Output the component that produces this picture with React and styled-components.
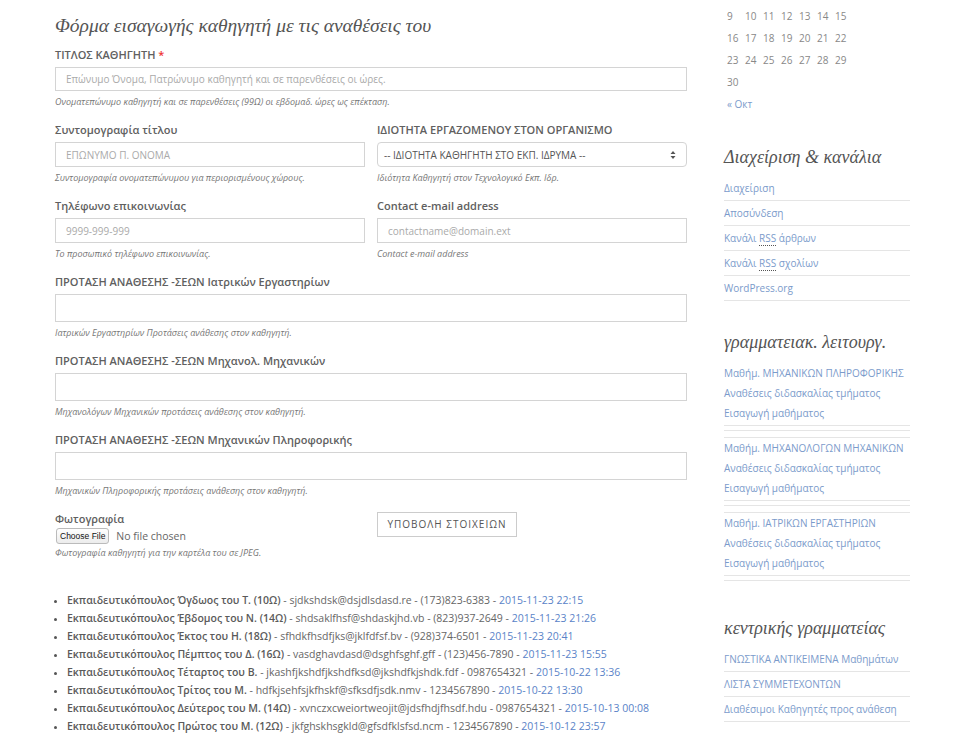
import styled, {createGlobalStyle} from 'styled-components';

const Global = createGlobalStyle`
	body {
		margin:0;
		background:#fff;
		font-family:"Open Sans", "Noto Sans", sans-serif;
		color:#555;
	}
`

const Page = styled.div`
	display:flex;
	align-items:flex-start;
	padding:0 52px 0 55px;
	gap:37px;
`

const Main = styled.main`
	width:632px;
	flex:none;
	padding-top:14px;
`

const Title = styled.h1`
	font-family:"Liberation Serif", "DejaVu Serif", serif;
	font-style:italic;
	font-weight:normal;
	font-size:19.5px;
	line-height:24px;
	color:#555;
	margin:0 0 9px;
`

const Row = styled.div`
	display:grid;
	grid-template-columns:1fr 1fr;
	column-gap:12px;
`

const Field = styled.div`
	margin-bottom:14px;
`

const Label = styled.div`
	font-size:11px;
	font-weight:600;
	line-height:16px;
	color:#606060;
	margin-bottom:4px;
	span { color:#e33; }
`

const Input = styled.div`
	box-sizing:border-box;
	height:${p=>p.h||25}px;
	border:1px solid #d4d4d4;
	border-radius:${p=>p.round?'4px':'0'};
	padding:0 10px 0 ${p=>p.pad||10}px;
	display:flex;
	align-items:center;
	justify-content:space-between;
	font-size:10px;
	color:${p=>p.dark?'#555':'#aaa'};
	background:#fff;
`

const Help = styled.div`
	font-size:9px;
	font-style:italic;
	line-height:12px;
	margin-top:${p=>p.tight?2:5}px;
	color:#777;
`

const Bottom = styled.div`
	display:grid;
	grid-template-columns:1fr 1fr;
	column-gap:12px;
	align-items:start;
`

const FileRow = styled.div`
	display:flex;
	align-items:center;
	gap:7px;
	height:18px;
	font-size:10.5px;
	color:#666;
	margin-top:-4px;
`

const FileButton = styled.span`
	font-family:"Liberation Sans", Arial, sans-serif;
	font-size:8.5px;
	color:#111;
	border:1px solid #bbb;
	border-radius:3px;
	background:linear-gradient(#fff,#ececec);
	padding:2px 3px;
	line-height:10px;
	margin-left:1px;
`

const Submit = styled.button`
	margin-top:-2px;
	width:140px;
	height:25px;
	border:1px solid #ccc;
	background:#fff;
	font-family:"Open Sans", sans-serif;
	font-size:10px;
	letter-spacing:1px;
	color:#555;
	padding:0;
`

const List = styled.ul`
	margin:32px 0 0;
	padding:0 0 0 12px;
	font-size:10.5px;
	line-height:18px;
	color:#666;
	li::marker { font-size:9px; color:#555; }
	b { font-weight:600; color:#5a5a5a; }
	a { color:#5a83c8; text-decoration:none; }
`

const Side = styled.aside`
	width:186px;
	flex:none;
	padding-top:5px;
`

const Calendar = styled.div`
	display:grid;
	grid-template-columns:repeat(7,18px);
	padding-left:3px;
	font-size:10px;
	line-height:22px;
	color:#888;
	a { color:#7b9bcb; text-decoration:none; grid-column:1 / span 3; }
`

const WidgetTitle = styled.h3`
	font-family:"Liberation Serif", "DejaVu Serif", serif;
	font-style:italic;
	font-weight:normal;
	font-size:18px;
	line-height:22px;
	color:#555;
	margin:${p=>p.top}px 0 8px;
`

const Links = styled.ul`
	list-style:none;
	margin:0;
	padding:0;
	font-size:10px;
	li {
		line-height:24px;
		border-bottom:1px solid #e5e5e5;
	}
	a { color:#7b9bcb; text-decoration:none; }
	abbr { text-decoration:none; border-bottom:1px dotted #555; }
`

const Group = styled.div`
	font-size:10px;
	line-height:20px;
	padding-bottom:2px;
	border-bottom:1px solid #e5e5e5;
	border-top:${p=>p.first?'none':'1px solid #e5e5e5'};
	margin-top:${p=>p.first?'10px':'0'};
	a { display:block; color:#7b9bcb; text-decoration:none; }
`

const Spacer = styled.div`
	height:4px;
	border-bottom:1px solid #e5e5e5;
	margin-bottom:${p=>p.last?0:6}px;
`

const Arrows = () => (
	<svg width="6" height="10" viewBox="0 0 6 10">
		<path d="M3 1 L5.5 4 H0.5 Z M3 9 L5.5 6 H0.5 Z" fill="#555"/>
	</svg>
)

const entries = [
	['Εκπαιδευτικόπουλος Όγδωος του Τ. (10Ω)','sjdkshdsk@dsjdlsdasd.re','(173)823-6383','2015-11-23 22:15'],
	['Εκπαιδευτικόπουλος Έβδομος του Ν. (14Ω)','shdsaklfhsf@shdaskjhd.vb','(823)937-2649','2015-11-23 21:26'],
	['Εκπαιδευτικόπουλος Έκτος του Η. (18Ω)','sfhdkfhsdfjks@jklfdfsf.bv','(928)374-6501','2015-11-23 20:41'],
	['Εκπαιδευτικόπουλος Πέμπτος του Δ. (16Ω)','vasdghavdasd@dsghfsghf.gff','(123)456-7890','2015-11-23 15:55'],
	['Εκπαιδευτικόπουλος Τέταρτος του Β.','jkashfjkshdfjkshdfksd@jkshdfkjshdk.fdf','0987654321','2015-10-22 13:36'],
	['Εκπαιδευτικόπουλος Τρίτος του Μ.','hdfkjsehfsjkfhskf@sfksdfjsdk.nmv','1234567890','2015-10-22 13:30'],
	['Εκπαιδευτικόπουλος Δεύτερος του Μ. (14Ω)','xvnczxcweiortweojit@jdsfhdjfhsdf.hdu','0987654321','2015-10-13 00:08'],
	['Εκπαιδευτικόπουλος Πρώτος του Μ. (12Ω)','jkfghskhsgkld@gfsdfklsfsd.ncm','1234567890','2015-10-12 23:57'],
];

const days = [9,10,11,12,13,14,15,16,17,18,19,20,21,22,23,24,25,26,27,28,29,30];

const groups = ['Μαθήμ. ΜΗΧΑΝΙΚΩΝ ΠΛΗΡΟΦΟΡΙΚΗΣ','Μαθήμ. ΜΗΧΑΝΟΛΟΓΩΝ ΜΗΧΑΝΙΚΩΝ','Μαθήμ. ΙΑΤΡΙΚΩΝ ΕΡΓΑΣΤΗΡΙΩΝ'];

export default function App(){
	return (
		<Page>
			<Global/>
			<Main>
				<Title>Φόρμα εισαγωγής καθηγητή με τις αναθέσεις του</Title>
				<Field>
					<Label>ΤΙΤΛΟΣ ΚΑΘΗΓΗΤΗ <span>*</span></Label>
					<Input h={24}>Επώνυμο Όνομα, Πατρώνυμο καθηγητή και σε παρενθέσεις οι ώρες.</Input>
					<Help>Ονοματεπώνυμο καθηγητή και σε παρενθέσεις (99Ω) οι εβδομαδ. ώρες ως επέκταση.</Help>
				</Field>
				<Row>
					<Field>
						<Label>Συντομογραφία τίτλου</Label>
						<Input>ΕΠΩΝΥΜΟ Π. ΟΝΟΜΑ</Input>
						<Help>Συντομογραφία ονοματεπώνυμου για περιορισμένους χώρους.</Help>
					</Field>
					<Field>
						<Label>ΙΔΙΟΤΗΤΑ ΕΡΓΑΖΟΜΕΝΟΥ ΣΤΟΝ ΟΡΓΑΝΙΣΜΟ</Label>
						<Input round dark pad={6}>-- ΙΔΙΟΤΗΤΑ ΚΑΘΗΓΗΤΗ ΣΤΟ ΕΚΠ. ΙΔΡΥΜΑ --<Arrows/></Input>
						<Help>Ιδιότητα Καθηγητή στον Τεχνολογικό Εκπ. Ιδρ.</Help>
					</Field>
				</Row>
				<Row>
					<Field>
						<Label>Τηλέφωνο επικοινωνίας</Label>
						<Input>9999-999-999</Input>
						<Help>Το προσωπικό τηλέφωνο επικοινωνίας.</Help>
					</Field>
					<Field>
						<Label>Contact e-mail address</Label>
						<Input>contactname@domain.ext</Input>
						<Help>Contact e-mail address</Help>
					</Field>
				</Row>
				<Field>
					<Label>ΠΡΟΤΑΣΗ ΑΝΑΘΕΣΗΣ -ΣΕΩΝ Ιατρικών Εργαστηρίων</Label>
					<Input h={28}/>
					<Help>Ιατρικών Εργαστηρίων Προτάσεις ανάθεσης στον καθηγητή.</Help>
				</Field>
				<Field>
					<Label>ΠΡΟΤΑΣΗ ΑΝΑΘΕΣΗΣ -ΣΕΩΝ Μηχανολ. Μηχανικών</Label>
					<Input h={28}/>
					<Help>Μηχανολόγων Μηχανικών προτάσεις ανάθεσης στον καθηγητή.</Help>
				</Field>
				<Field>
					<Label>ΠΡΟΤΑΣΗ ΑΝΑΘΕΣΗΣ -ΣΕΩΝ Μηχανικών Πληροφορικής</Label>
					<Input h={28}/>
					<Help>Μηχανικών Πληροφορικής προτάσεις ανάθεσης στον καθηγητή.</Help>
				</Field>
				<Bottom>
					<div>
						<Label>Φωτογραφία</Label>
						<FileRow><FileButton>Choose File</FileButton>No file chosen</FileRow>
						<Help tight>Φωτογραφία καθηγητή για την καρτέλα του σε JPEG.</Help>
					</div>
					<div>
						<Submit>ΥΠΟΒΟΛΗ ΣΤΟΙΧΕΙΩΝ</Submit>
					</div>
				</Bottom>
				<List>
					{entries.map((e,i)=>(
						<li key={i}><b>{e[0]}</b> - {e[1]} - {e[2]} - <a href="#">{e[3]}</a></li>
					))}
				</List>
			</Main>
			<Side>
				<Calendar>
					{days.map(d=><span key={d}>{d}</span>)}
					<span/><span/><span/><span/><span/><span/>
					<a href="#">« Окт</a>
				</Calendar>
				<WidgetTitle top={31}>Διαχείριση &amp; κανάλια</WidgetTitle>
				<Links>
					<li><a href="#">Διαχείριση</a></li>
					<li><a href="#">Αποσύνδεση</a></li>
					<li><a href="#">Κανάλι <abbr>RSS</abbr> άρθρων</a></li>
					<li><a href="#">Κανάλι <abbr>RSS</abbr> σχολίων</a></li>
					<li><a href="#">WordPress.org</a></li>
				</Links>
				<WidgetTitle top={30}>γραμματειακ. λειτουργ.</WidgetTitle>
				{groups.map((g,i)=>(
					<div key={i}>
						<Group first={i===0}>
							<a href="#">{g}</a>
							<a href="#">Αναθέσεις διδασκαλίας τμήματος</a>
							<a href="#">Εισαγωγή μαθήματος</a>
						</Group>
						<Spacer last={i===groups.length-1}/>
					</div>
				))}
				<WidgetTitle top={36}>κεντρικής γραμματείας</WidgetTitle>
				<Links>
					<li><a href="#">ΓΝΩΣΤΙΚΑ ΑΝΤΙΚΕΙΜΕΝΑ Μαθημάτων</a></li>
					<li><a href="#">ΛΙΣΤΑ ΣΥΜΜΕΤΕΧΟΝΤΩΝ</a></li>
					<li><a href="#">Διαθέσιμοι Καθηγητές προς ανάθεση</a></li>
				</Links>
			</Side>
		</Page>
	);
}
